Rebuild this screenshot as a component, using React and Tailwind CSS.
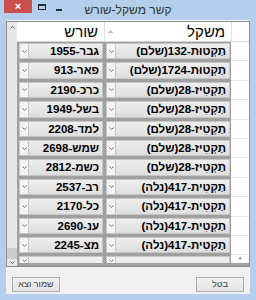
import React from 'react';

const rows = [
  { mishkal: 'תַקְטוּת-132(שלם)', shoresh: 'גבר-1955' },
  { mishkal: 'תַקְטוּת-1724(שלם)', shoresh: 'פאר-913' },
  { mishkal: 'תַקְטִיז-28(שלם)', shoresh: 'כרכ-2190' },
  { mishkal: 'תַקְטִיז-28(שלם)', shoresh: 'בשל-1949' },
  { mishkal: 'תַקְטִיז-28(שלם)', shoresh: 'למד-2208' },
  { mishkal: 'תַקְטִיז-28(שלם)', shoresh: 'שמש-2698' },
  { mishkal: 'תַקְטִיז-28(שלם)', shoresh: 'כשמ-2812' },
  { mishkal: 'תַקְטִית-417(נלה)', shoresh: 'רב-2537' },
  { mishkal: 'תַקְטִית-417(נלה)', shoresh: 'כל-2170' },
  { mishkal: 'תַקְטִית-417(נלה)', shoresh: 'ענ-2690' },
  { mishkal: 'תַקְטִית-417(נלה)', shoresh: 'מצ-2245' },
];

const ui = { fontFamily: '"Liberation Sans", "DejaVu Sans", sans-serif' };

// little "v" used by the combo cells and the scrollbar
const Chevron = ({ up, color = '#707070' }) => (
  <svg width="5" height="3" viewBox="0 0 5 3">
    <path d={up ? 'M0.5 2.5 L2.5 0.5 L4.5 2.5' : 'M0.5 0.5 L2.5 2.5 L4.5 0.5'} fill="none" stroke={color} strokeWidth="1" />
  </svg>
);

const ComboCell = ({ text, width }) => (
  <div className={`${width} flex shrink-0 border-b border-l border-[#a0a0a0] p-px`}>
    <div className="flex flex-1 border border-[#c6c6c6]">
      <div className="flex-1 overflow-hidden whitespace-nowrap bg-gradient-to-b from-[#eeeeee] to-[#dedede] pr-[3px] text-right text-[11.5px] font-bold leading-[14px] text-black">
        {text}
      </div>
      <div className="flex w-[9px] items-center justify-center border-r border-[#c6c6c6] bg-[#f3f3f3]">
        <Chevron />
      </div>
    </div>
  </div>
);

const Row = ({ row }) => (
  <div className="flex h-[19.4px] shrink-0">
    <div className="w-[18px] shrink-0 border-b border-[#e6e6e6] bg-white" />
    <ComboCell text={row.mishkal} width="w-[127px]" />
    <ComboCell text={row.shoresh} width="w-[87px]" />
  </div>
);

// the "new row" at the bottom, only partly in view
const NewRow = () => (
  <div className="flex h-[8px] shrink-0">
    <div className="flex w-[18px] shrink-0 items-center justify-center bg-white text-[8px] leading-[7px] text-[#555]">*</div>
    <div className="flex w-[127px] shrink-0 border-l border-[#a0a0a0] p-px pb-0">
      <div className="flex flex-1 border border-b-0 border-[#c6c6c6]">
        <div className="flex-1 bg-[#eeeeee]" />
        <div className="flex w-[9px] items-center justify-center border-r border-[#c6c6c6] bg-[#f3f3f3]">
          <Chevron />
        </div>
      </div>
    </div>
    <div className="flex w-[87px] shrink-0 border-l border-[#a0a0a0] p-px pb-0">
      <div className="flex flex-1 border border-b-0 border-[#c6c6c6]">
        <div className="flex-1 bg-[#eeeeee]" />
        <div className="flex w-[9px] items-center justify-center border-r border-[#c6c6c6] bg-[#f3f3f3]">
          <Chevron />
        </div>
      </div>
    </div>
  </div>
);

export default function App() {
  return (
    <div className="flex h-[300px] w-[256px] flex-col bg-[#b3cfeb]" style={ui}>
      {/* title bar */}
      <div className="grid h-[20px] shrink-0 grid-cols-[1fr_auto_1fr]">
        <div className="flex items-start">
          <div className="ml-[4px] flex h-[13px] w-[28px] items-center justify-center bg-[#c9504f] text-[11px] font-bold leading-none text-white">
            ×
          </div>
          <div className="ml-[6px] mt-[4px] h-[6px] w-[8px] border border-t-2 border-[#2a2a2a]" />
          <div className="ml-[10px] mt-[9px] h-[2px] w-[6px] bg-[#2a2a2a]" />
        </div>
        <div className="pt-[3px] text-[12px] leading-[14px] text-[#333]" dir="rtl">
          קשר משקל-שורש
        </div>
        <div />
      </div>

      {/* client area */}
      <div className="mx-[6px] flex flex-1 flex-col bg-[#f0f0f0] pt-px">
        <div className="flex h-[246px] border border-[#8e8e8e] bg-[#a0a0a0]">
          {/* scrollbar on the left */}
          <div className="flex w-[10px] shrink-0 flex-col bg-[#e8e8e8]">
            <div className="flex h-[10px] items-center justify-center">
              <Chevron up color="#606060" />
            </div>
            <div className="flex flex-1 flex-col justify-end">
              <div className="h-[11px] bg-[#cdcdcd]" />
            </div>
            <div className="flex h-[7px] items-center justify-center">
              <Chevron color="#606060" />
            </div>
          </div>

          <div className="flex flex-1 flex-col" dir="rtl">
            {/* header */}
            <div className="flex h-[20px] shrink-0 border-b border-[#d5d5d5] bg-white">
              <div className="w-[18px] shrink-0 border-l border-[#e2e2e2]" />
              <div className="flex w-[127px] shrink-0 items-center justify-between border-l border-[#e2e2e2] pr-[6px] pl-[3px]">
                <span className="text-[15px] leading-none text-black">משקל</span>
                <svg width="5" height="3" viewBox="0 0 5 3">
                  <path d="M0 3 L2.5 0 L5 3 Z" fill="#b4b4b4" />
                </svg>
              </div>
              <div className="flex w-[87px] shrink-0 items-center pr-[6px]">
                <span className="text-[15px] leading-none text-black">שורש</span>
              </div>
            </div>

            {/* rows */}
            <div className="flex flex-col">
              {rows.map((r, i) => (
                <Row key={i} row={r} />
              ))}
              <NewRow />
            </div>
          </div>
        </div>

        {/* buttons */}
        <div className="mt-[10px] flex justify-between px-[6px]" dir="rtl">
          <button className="h-[15px] w-[48px] border border-[#acacac] bg-gradient-to-b from-[#f2f2f2] to-[#e3e3e3] text-[9px] leading-none text-[#444]">
            בטל
          </button>
          <button className="h-[15px] w-[48px] border border-[#acacac] bg-gradient-to-b from-[#f2f2f2] to-[#e3e3e3] text-[9px] leading-none text-[#444]">
            שמור וצא
          </button>
        </div>
      </div>
      <div className="h-[6px] shrink-0" />
    </div>
  );
}
